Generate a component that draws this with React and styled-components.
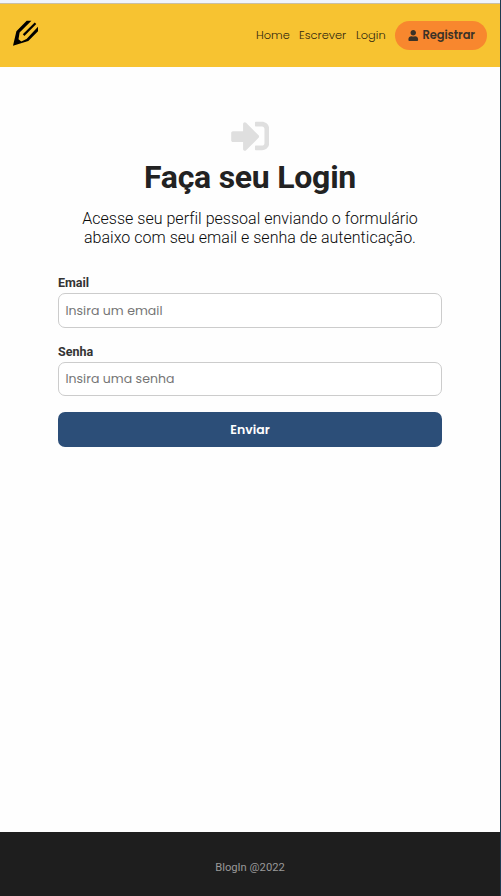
import React from 'react';
import styled, { createGlobalStyle } from 'styled-components';
import { FaUser, FaSignInAlt } from 'react-icons/fa';

const Global = createGlobalStyle`
  * { box-sizing: border-box; margin: 0; padding: 0; }
  body { font-family: Roboto, "Liberation Sans", sans-serif; background: #fff; color: #222; }
`;
const Page = styled.div`
  display: flex; flex-direction: column; min-height: 896px;
  border-right: 1px solid #1f3a50; background: #fefefe;
`;
const TopEdge = styled.div`height: 4px; background: #f0f4fb; flex: none; border-bottom: 1px solid #c9bfa6;`;
const Header = styled.header`
  height: 63px; background: #f7c331; display: flex; align-items: center;
  justify-content: space-between; padding: 0 13px 0 12px;
`;
const Logo = styled.svg`width: 27px; height: 27px; display: block; margin-bottom: 5px;`;
const Nav = styled.nav`
  display: flex; align-items: center; font-family: Poppins, Inter, sans-serif;
  font-size: 11.4px; color: #30270f;
`;
const NavLink = styled.a`
  font-weight: 300; width: ${p => p.$w}px; margin-right: 9px; white-space: nowrap;
`;
const Register = styled.a`
  width: 92px; height: 29px; border-radius: 15px; background: #f8872e; color: #3c3227;
  display: flex; align-items: center; padding-left: 13px; gap: 4px; font-weight: 600;
  font-size: 11.5px; letter-spacing: -0.1px; white-space: nowrap;
  svg { flex: none; width: 10.5px; height: 11px; }
`;
const Main = styled.main`
  flex: 1; padding: 50px 58px 0; display: flex; flex-direction: column; align-items: center;
`;
const LoginIcon = styled(FaSignInAlt)`width: 38.4px; height: 38px; display: block; color: #dfdfdf; flex: none;`;
const Title = styled.h1`
  font-size: 32px; line-height: 38px; font-weight: 700; margin-top: 3px; letter-spacing: -0.25px; white-space: nowrap;
`;
const Intro = styled.p`
  font-size: 16px; line-height: 19px; margin-top: 13px; text-align: center; font-weight: 300;
  color: #080808; white-space: nowrap; letter-spacing: 0.02px;
`;
const Form = styled.form`width: 384px; margin-top: 28px; display: flex; flex-direction: column;`;
const Label = styled.label`
  font-size: 12.5px; line-height: 15px; font-weight: 700; color: #333; display: block; margin-bottom: 3px;
`;
const Input = styled.input`
  display: block; width: 100%; height: ${p => p.$h}px; margin-bottom: 16px;
  border: 1px solid #ccc; border-radius: 7px; padding: 0 6.4px; background: #fff;
  font: 400 12.5px Poppins, Inter, sans-serif; outline: none; letter-spacing: 0.04px;
  &::placeholder { color: #757575; opacity: 1; }
`;
const Submit = styled.button`
  height: 35px; border: 0; border-radius: 7px; background: #2c4e78; color: #fff;
  font: 600 12.5px Poppins, Inter, sans-serif;
`;
const Footer = styled.footer`
  height: 64px; background: #1e1e1e; color: #999; font-size: 11.2px; display: flex;
  align-items: center; justify-content: center; padding-top: 6px;
`;

export default function App() {
  return (
    <>
      <Global />
      <Page>
        <TopEdge />
        <Header>
          <Logo viewBox="0 0 27 27">
            <path fill="#000" fillRule="evenodd" d="M1 25.7 4.400 11.200 14.700 .7H19.400L7.600 12.500 6.500 19.200 9.300 21.400 14.500 19 26 6.800V11.200L16.300 21Z" />
            <path stroke="#000" strokeWidth="2.200" d="M11.600 15.100 23.500 3.300" />
          </Logo>
          <Nav>
            <NavLink $w={34}>Home</NavLink>
            <NavLink $w={48}>Escrever</NavLink>
            <NavLink $w={30}>Login</NavLink>
            <Register><FaUser />Registrar</Register>
          </Nav>
        </Header>
        <Main>
          <LoginIcon />
          <Title>Faça seu Login</Title>
          <Intro>Acesse seu perfil pessoal enviando o formulário<br />abaixo com seu email e senha de autenticação.</Intro>
          <Form>
            <Label htmlFor="email">Email</Label>
            <Input id="email" type="email" placeholder="Insira um email" $h={35} />
            <Label htmlFor="senha">Senha</Label>
            <Input id="senha" type="password" placeholder="Insira uma senha" $h={34} />
            <Submit type="button">Enviar</Submit>
          </Form>
        </Main>
        <Footer>BlogIn @2022</Footer>
      </Page>
    </>
  );
}
